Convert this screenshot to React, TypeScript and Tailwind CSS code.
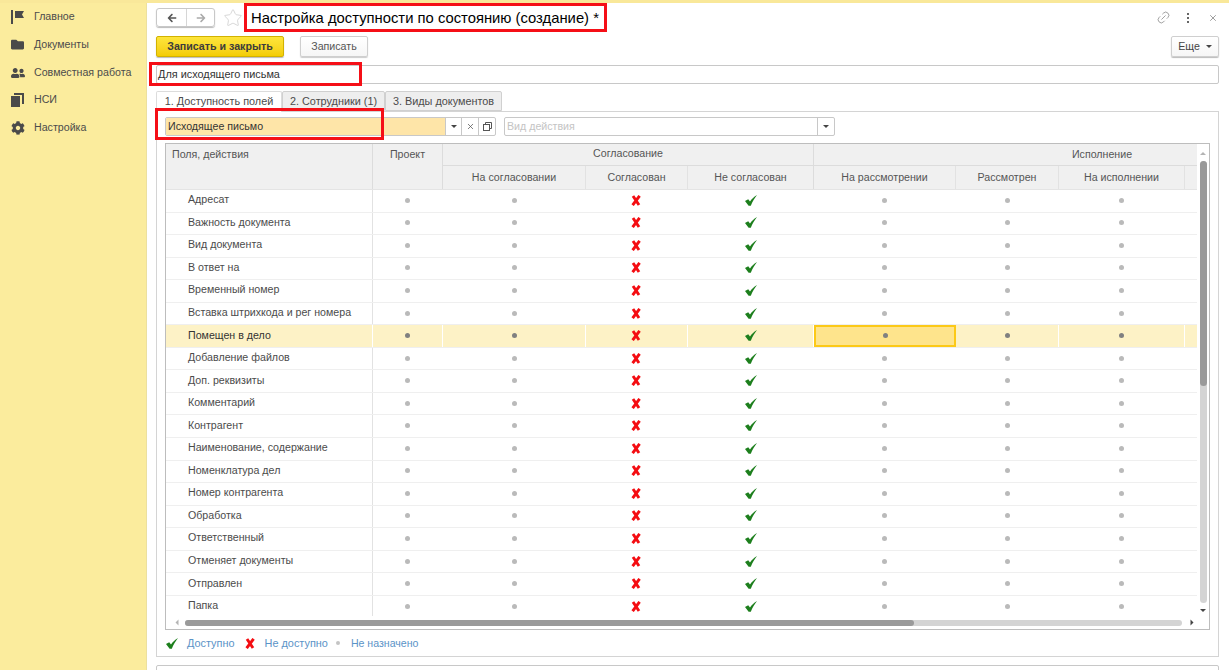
import { FaArrowLeft, FaArrowRight, FaCog, FaFolder, FaUserFriends } from "react-icons/fa";
import { Link2, Star, X } from "lucide-react";

type Mark = "dot" | "yes" | "no" | "none";

const rows = [
  "Адресат",
  "Важность документа",
  "Вид документа",
  "В ответ на",
  "Временный номер",
  "Вставка штрихкода и рег номера",
  "Помещен в дело",
  "Добавление файлов",
  "Доп. реквизиты",
  "Комментарий",
  "Контрагент",
  "Наименование, содержание",
  "Номенклатура дел",
  "Номер контрагента",
  "Обработка",
  "Ответственный",
  "Отменяет документы",
  "Отправлен",
  "Папка",
];

const marks: Mark[] = ["dot", "dot", "no", "yes", "dot", "dot", "dot", "none"];
const colTemplate = "grid-cols-[207px_70px_143px_102px_126px_142px_103px_126px_13px]";

function FlagIcon() {
  return (
    <svg width="13" height="14" viewBox="0 0 13 14" fill="#4a4a4a">
      <rect x="0" y="0" width="2" height="14" />
      <path d="M4 1h9l-2 3.5 2 3.5H4z" />
    </svg>
  );
}

function PagesIcon() {
  return (
    <svg width="13" height="14" viewBox="0 0 13 14" fill="#4a4a4a">
      <rect x="0" y="3" width="9" height="11" />
      <path d="M3 0h10v11h-2V2H3z" />
    </svg>
  );
}

function CheckMark() {
  return (
    <svg width="12" height="11" viewBox="0 0 12 12" fill="#1d7f1d" preserveAspectRatio="none">
      <path d="M0 6.6 L3.2 4.6 L5 7 C6.5 4.6 8.6 2.2 12 0 C9.6 3.4 7.4 7.4 5.8 11.8 L3.6 11.8 Z" />
    </svg>
  );
}

function CrossMark() {
  return (
    <svg width="10" height="11" viewBox="0 0 10 11" fill="none" stroke="#f40d12" strokeWidth="2.9">
      <path d="M2 1 L8 10 M8.6 0.8 L1.6 10.2" />
    </svg>
  );
}

function Caret({ className }: { className?: string }) {
  return <span className={`inline-block h-0 w-0 border-x-[3px] border-t-[3px] border-x-transparent border-t-[#444] ${className ?? ""}`} />;
}

function Cell({ mark, active, selected }: { mark: Mark; active: boolean; selected?: boolean }) {
  return (
    <div
      className={`flex items-center justify-center pb-px ${
        selected ? "border-2 border-[#fcc917] bg-[#fee48c]" : active ? "border-r border-white" : "pr-px"
      }`}
    >
      {mark === "dot" && (
        <span className={`h-[5px] w-[5px] rounded-full ${active ? "bg-[#808080]" : "bg-[#bababa]"}`} />
      )}
      {mark === "yes" && <CheckMark />}
      {mark === "no" && (
        <span className="mr-[2px] flex">
          <CrossMark />
        </span>
      )}
    </div>
  );
}

export default function App() {
  const nav = [
    { label: "Главное", icon: <FlagIcon /> },
    { label: "Документы", icon: <FaFolder size={13} color="#4a4a4a" /> },
    { label: "Совместная работа", icon: <FaUserFriends size={14} color="#4a4a4a" /> },
    { label: "НСИ", icon: <PagesIcon /> },
    { label: "Настройка", icon: <FaCog size={14} color="#4a4a4a" /> },
  ];

  return (
    <div className="flex h-screen w-full flex-col overflow-hidden bg-white font-['Liberation_Sans',Arial,sans-serif] text-[10.65px] text-[#4b4b4b]">
      <div className="h-[3px] shrink-0 bg-[#f9e89a]" />
      <div className="flex min-h-0 flex-1">
        {/* Sidebar */}
        <aside className="w-[147px] shrink-0 border-r border-[#ece09f] bg-[#fbec9d] pt-[0.6px]">
          {nav.map((item) => (
            <div key={item.label} className="flex h-[27.6px] items-center pl-[11px]">
              <span className="flex w-[23px] shrink-0 items-center">{item.icon}</span>
              <span>{item.label}</span>
            </div>
          ))}
        </aside>

        <main className="flex min-w-0 flex-1 flex-col pl-[9px] pr-[10px]">
          {/* Title row */}
          <div className="flex h-[29px] shrink-0 items-center">
            <div className="flex h-[19px] w-[59px] overflow-hidden rounded-[3px] border border-[#c8c8c8] shadow-[0_1px_1px_#bbb]">
              <span className="flex w-[30px] items-center justify-center border-r border-[#d6d6d6]">
                <FaArrowLeft size={10} color="#555" />
              </span>
              <span className="flex flex-1 items-center justify-center">
                <FaArrowRight size={10} color="#aaa" />
              </span>
            </div>
            <Star size={20} strokeWidth={1} color="#cfcfcf" className="ml-[8px]" />
            <div className="ml-px flex h-[29px] w-[363px] items-center border-[3px] border-[#f50f17] pl-[4px] pt-px text-[14.8px] whitespace-nowrap text-black">
              Настройка доступности по состоянию (создание) *
            </div>
            <div className="ml-auto flex items-center text-[#8a8a8a]">
              <Link2 size={15} strokeWidth={1.2} className="-rotate-45" />
              <span className="ml-[10px] flex h-[10px] w-[14px] flex-col items-center justify-between">
                <span className="h-[2px] w-[2px] bg-[#666]" />
                <span className="h-[2px] w-[2px] bg-[#666]" />
                <span className="h-[2px] w-[2px] bg-[#666]" />
              </span>
              <X size={10} className="ml-[13px] mr-[1px]" />
            </div>
          </div>

          {/* Command bar */}
          <div className="mt-[4px] flex h-[21px] shrink-0 items-stretch">
            <button className="w-[128px] rounded-[2px] border border-[#d2b200] bg-gradient-to-b from-[#fde53a] to-[#f4cd02] font-bold text-[#3c3c3c] shadow-[0_1px_1px_#bbb]">
              Записать и закрыть
            </button>
            <button className="ml-[16px] w-[68px] rounded-[2px] border border-[#cfcfcf] bg-gradient-to-b from-white to-[#f6f6f6] text-[#555] shadow-[0_1px_1px_#ccc]">
              Записать
            </button>
            <button className="ml-auto flex w-[48px] items-center justify-center gap-[6px] rounded-[2px] border border-[#cfcfcf] bg-gradient-to-b from-white to-[#f6f6f6] text-[#444] shadow-[0_1px_1px_#bbb]">
              Еще <Caret />
            </button>
          </div>

          {/* Name input */}
          <div className="relative mt-[8px] flex h-[19px] shrink-0 items-center rounded-[2px] border border-[#c8c8c8] pl-px text-[10.9px] text-[#333]">
            Для исходящего письма
            <span className="absolute left-[-8px] top-[-4px] h-[24px] w-[213px] border-[3px] border-[#f50f17]" />
          </div>

          {/* Tabs */}
          <div className="mt-[7px] flex h-[20px] shrink-0 items-start text-[10.85px]">
            <div className="relative z-10 flex h-[21px] w-[126px] items-center justify-center rounded-t-[2px] border-x border-t border-[#dcdcdc] bg-white pb-px">
              1. Доступность полей
            </div>
            <div className="flex h-[20px] w-[103px] items-center justify-center rounded-t-[2px] border border-[#d0d0d0] bg-[#eeeeee]">
              2. Сотрудники (1)
            </div>
            <div className="flex h-[20px] w-[117px] items-center justify-center rounded-t-[2px] border border-[#d0d0d0] bg-[#eeeeee]">
              3. Виды документов
            </div>
          </div>

          {/* Tab panel */}
          <section className="flex h-[546px] shrink-0 flex-col border border-[#d4d4d4] px-[8px] pt-[5px]">
            <div className="relative z-20 flex h-[19px] shrink-0 items-stretch">
              <div className="flex w-[331px] overflow-hidden rounded-[2px] border border-[#c8c8c8]">
                <div className="flex w-[281px] items-center bg-[#fee5a8] pl-[2px] text-[#333]">Исходящее письмо</div>
                <span className="flex w-[16px] items-center justify-center border-l border-[#c8c8c8]"><Caret /></span>
                <span className="flex w-[17px] items-center justify-center border-l border-[#c8c8c8]"><X size={9} color="#555" /></span>
                <span className="flex w-[17px] items-center justify-center border-l border-[#c8c8c8]">
                  <svg width="9" height="9" viewBox="0 0 9 9" fill="none" stroke="#555">
                    <rect x="0.5" y="2.5" width="6" height="6" fill="white" />
                    <path d="M2.5 2V0.5h6v6H7" />
                  </svg>
                </span>
              </div>
              <div className="ml-[8px] flex w-[331px] overflow-hidden rounded-[2px] border border-[#c8c8c8]">
                <div className="flex flex-1 items-center pl-[2px] text-[#c4c4c4]">Вид действия</div>
                <span className="flex w-[17px] items-center justify-center border-l border-[#c8c8c8]"><Caret /></span>
              </div>
              <span className="absolute left-[-10px] top-[-9px] h-[32px] w-[229px] border-[3px] border-[#f50f17]" />
            </div>

            {/* Table */}
            <div className="mt-[7px] flex h-[487px] shrink-0 flex-col overflow-hidden border border-[#bdbdbd]">
              <div className="flex min-h-0 flex-1">
                <div className="min-w-0 flex-1 overflow-hidden">
                  <div className={`grid h-[46px] ${colTemplate} grid-rows-[22px_23px] border-b border-[#e4e4e4] bg-[#f0f0f0] text-[#555]`}>
                    <div className="row-span-2 border-r border-[#dcdcdc] pl-[6px] pt-[3px]">Поля, действия</div>
                    <div className="row-span-2 border-r border-[#dcdcdc] pt-[3px] text-center">Проект</div>
                    <div className="col-span-3 flex items-center justify-center border-r border-b border-[#dcdcdc] pb-px">Согласование</div>
                    <div className="col-span-4 w-[576px] border-b border-[#dcdcdc] pl-[192px] pt-[3px]">
                      <div className="w-[192px] text-center">Исполнение</div>
                    </div>
                    <div className="flex items-center justify-center border-r border-[#e2e2e2]">На согласовании</div>
                    <div className="flex items-center justify-center border-r border-[#e2e2e2]">Согласован</div>
                    <div className="flex items-center justify-center border-r border-[#dcdcdc]">Не согласован</div>
                    <div className="flex items-center justify-center border-r border-[#e2e2e2]">На рассмотрении</div>
                    <div className="flex items-center justify-center border-r border-[#e2e2e2]">Рассмотрен</div>
                    <div className="flex items-center justify-center border-r border-[#e2e2e2]">На исполнении</div>
                    <div />
                  </div>
                  {rows.map((row, i) => {
                    const active = i === 6;
                    return (
                      <div
                        key={row}
                        className={`grid h-[22.56px] ${colTemplate} border-b border-[#efefef] ${active ? "bg-[#fdf2c6] text-[#333]" : ""}`}
                      >
                        <div className={`flex items-center border-r pb-px pl-[22px] ${active ? "border-white" : "border-[#e2e2e2]"}`}>{row}</div>
                        {marks.map((m, j) => (
                          <Cell key={j} mark={m} active={active} selected={active && j === 4} />
                        ))}
                      </div>
                    );
                  })}
                </div>

                {/* Vertical scrollbar */}
                <div className="flex w-[12px] shrink-0 flex-col items-center pt-[8px]">
                  <Caret className="rotate-180 opacity-40" />
                  <div className="mt-[6px] h-[442px] w-[7px] rounded-[4px] bg-[#d4d4d4]">
                    <div className="h-[225px] rounded-[4px] bg-[#9a9a9a]" />
                  </div>
                  <Caret className="mt-[6px]" />
                </div>
              </div>

              {/* Horizontal scrollbar */}
              <div className="flex h-[13px] shrink-0 items-center pl-[8px]">
                <Caret className="rotate-90 opacity-40" />
                <div className="ml-[5px] h-[6px] w-[997px] rounded-[3px] bg-[#d4d4d4]">
                  <div className="h-[6px] w-[729px] rounded-[3px] bg-[#9a9a9a]" />
                </div>
                <Caret className="ml-[7px] -rotate-90" />
              </div>
            </div>

            {/* Legend */}
            <div className="flex flex-1 items-center pl-[1px] text-[10.9px] text-[#5b93c7]">
              <CheckMark />
              <span className="ml-[9px]">Доступно</span>
              <span className="ml-[10px] flex"><CrossMark /></span>
              <span className="ml-[10px]">Не доступно</span>
              <span className="ml-[8px] h-[4px] w-[4px] rounded-full bg-[#c4c4c4]" />
              <span className="ml-[11px] pt-px text-[10.6px]">Не назначено</span>
            </div>
          </section>

          {/* Next panel, cut off by the window */}
          <div className="mt-[8px] h-[30px] shrink-0 rounded-[2px] border border-[#c8c8c8]" />
        </main>
      </div>
    </div>
  );
}
